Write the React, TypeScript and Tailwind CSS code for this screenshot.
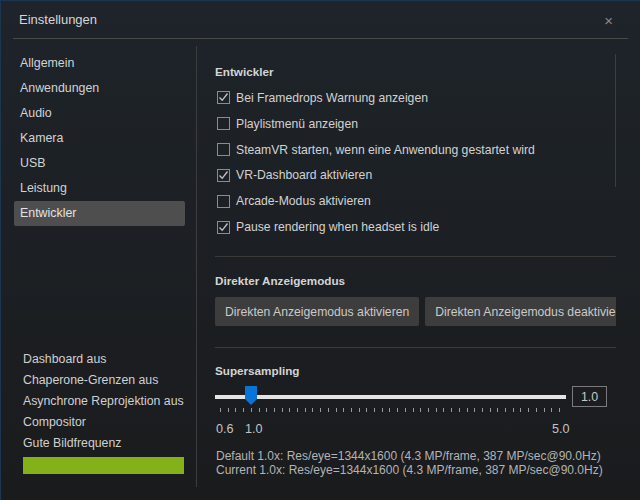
import React from 'react'

const FONT = { fontFamily: '"Liberation Sans", Arial, sans-serif' }

const navItems = ['Allgemein', 'Anwendungen', 'Audio', 'Kamera', 'USB', 'Leistung', 'Entwickler']
const statusItems = [
  'Dashboard aus',
  'Chaperone-Grenzen aus',
  'Asynchrone Reprojektion aus',
  'Compositor',
  'Gute Bildfrequenz',
]

const devOptions = [
  { label: 'Bei Framedrops Warnung anzeigen', checked: true },
  { label: 'Playlistmenü anzeigen', checked: false },
  { label: 'SteamVR starten, wenn eine Anwendung gestartet wird', checked: false },
  { label: 'VR-Dashboard aktivieren', checked: true },
  { label: 'Arcade-Modus aktivieren', checked: false },
  { label: 'Pause rendering when headset is idle', checked: true },
]

function Checkbox({ checked }: { checked: boolean }) {
  return (
    <span className="w-[13px] h-[13px] border border-[#8c8c8c] flex items-center justify-center shrink-0">
      {checked && (
        <svg width="11" height="11" viewBox="0 0 11 11">
          <path d="M1.5 5.5 L4.2 8.3 L9.5 1.5" fill="none" stroke="#c4c4c4" strokeWidth="1.3" />
        </svg>
      )}
    </span>
  )
}

function Section({ title }: { title: string }) {
  return <div className="text-[11.7px] font-bold text-[#d4d4d4] leading-[16px]">{title}</div>
}

export default function App() {
  const ticks = Array.from({ length: 45 })

  return (
    <div
      className="w-[640px] h-[500px] relative overflow-hidden border-t border-l border-[#1c3550] bg-gradient-to-b from-[#1e242a] to-[#1a1b1d] text-[#d2d2d2]"
      style={FONT}
    >
      <div className="h-[37px] flex items-center justify-between pl-[18px] pr-[27px]">
        <span className="text-[13px] text-[#d6d6d6]">Einstellungen</span>
        <span className="text-[15px] text-[#8a8a8a] leading-none mt-[2px]">×</span>
      </div>
      <div className="mx-[12px] h-px bg-[#4a4a4a]" />

      <div className="flex mt-[7px] h-[441px]">
        <aside className="w-[196px] border-r border-[#3c3c3c] flex flex-col justify-between pt-[5px] pb-[13px] shrink-0">
          <nav className="flex flex-col">
            {navItems.map((item) => (
              <div
                key={item}
                className={
                  item === 'Entwickler'
                    ? 'ml-[13px] w-[171px] h-[25px] flex items-center pl-[6px] text-[12.4px] rounded-[2px] bg-[#4e4e4e] text-[#e2e2e2]'
                    : 'ml-[13px] w-[171px] h-[25px] flex items-center pl-[6px] text-[12.4px]'
                }
              >
                {item}
              </div>
            ))}
          </nav>
          <div className="pl-[22px] flex flex-col">
            {statusItems.map((item) => (
              <div key={item} className="h-[21px] flex items-center text-[12.3px] text-[#d0d0d0]">
                {item}
              </div>
            ))}
            <div className="mt-[3px] w-[161px] h-[17px] bg-[#84b01a]" />
          </div>
        </aside>

        <main className="relative w-[419px] pl-[18px] overflow-hidden">
          <div className="absolute left-[418px] top-[8px] w-[5px] h-[133px] bg-[#3e3e3e]" />
          <div className="w-[401px] pt-[18px]">
            <Section title="Entwickler" />
            <div className="mt-[5px] flex flex-col">
              {devOptions.map((opt) => (
                <div key={opt.label} className="h-[25.9px] flex items-center gap-[6px] pl-[2px] text-[12.2px]">
                  <Checkbox checked={opt.checked} />
                  <span>{opt.label}</span>
                </div>
              ))}
            </div>

            <div className="mt-[16px] h-px bg-[#3a3a3a]" />
            <div className="mt-[16px]">
              <Section title="Direkter Anzeigemodus" />
            </div>
            <div className="mt-[8px] flex gap-[6px] whitespace-nowrap">
              <button className="h-[29px] px-[10px] bg-[#3d3d3d] rounded-[2px] text-[12.2px] text-[#cacaca] shrink-0">
                Direkten Anzeigemodus aktivieren
              </button>
              <button className="h-[29px] px-[10px] bg-[#3d3d3d] rounded-[2px] text-[12.2px] text-[#cacaca] shrink-0">
                Direkten Anzeigemodus deaktivieren
              </button>
            </div>

            <div className="mt-[21px] h-px bg-[#3a3a3a]" />
            <div className="mt-[15px]">
              <Section title="Supersampling" />
            </div>

            <div className="mt-[7px] flex items-center">
              <div className="relative w-[351px] h-[21px] flex items-center">
                <div className="w-full h-[4px] bg-[#e4e4e4]" />
                <svg className="absolute left-[30px] top-0" width="12" height="20" viewBox="0 0 12 20">
                  <path d="M0 0 H12 V13 L6 19 L0 13 Z" fill="#0a74d6" />
                </svg>
              </div>
              <div className="ml-[6px] w-[35px] h-[21px] border border-[#7a7a7a] flex items-center justify-center text-[12.4px] text-[#c8c8c8]">
                1.0
              </div>
            </div>

            <div className="mt-[1px] ml-[5px] w-[340px] h-[5px] flex justify-between">
              {ticks.map((_, i) => (
                <span key={i} className="w-px h-[4px] bg-[#9a9a9a]" />
              ))}
            </div>

            <div className="relative mt-[7px] h-[16px] text-[12.6px] text-[#c4c4c4]">
              <span className="absolute left-[1px]">0.6</span>
              <span className="absolute left-[30px]">1.0</span>
              <span className="absolute left-[337px]">5.0</span>
            </div>

            <div className="mt-[13px] text-[12px] leading-[14px] text-[#b4b4b4] whitespace-nowrap pl-[1px]">
              <div>Default 1.0x: Res/eye=1344x1600 (4.3 MP/frame, 387 MP/sec@90.0Hz)</div>
              <div>Current 1.0x: Res/eye=1344x1600 (4.3 MP/frame, 387 MP/sec@90.0Hz)</div>
            </div>
          </div>
        </main>
      </div>
    </div>
  )
}
